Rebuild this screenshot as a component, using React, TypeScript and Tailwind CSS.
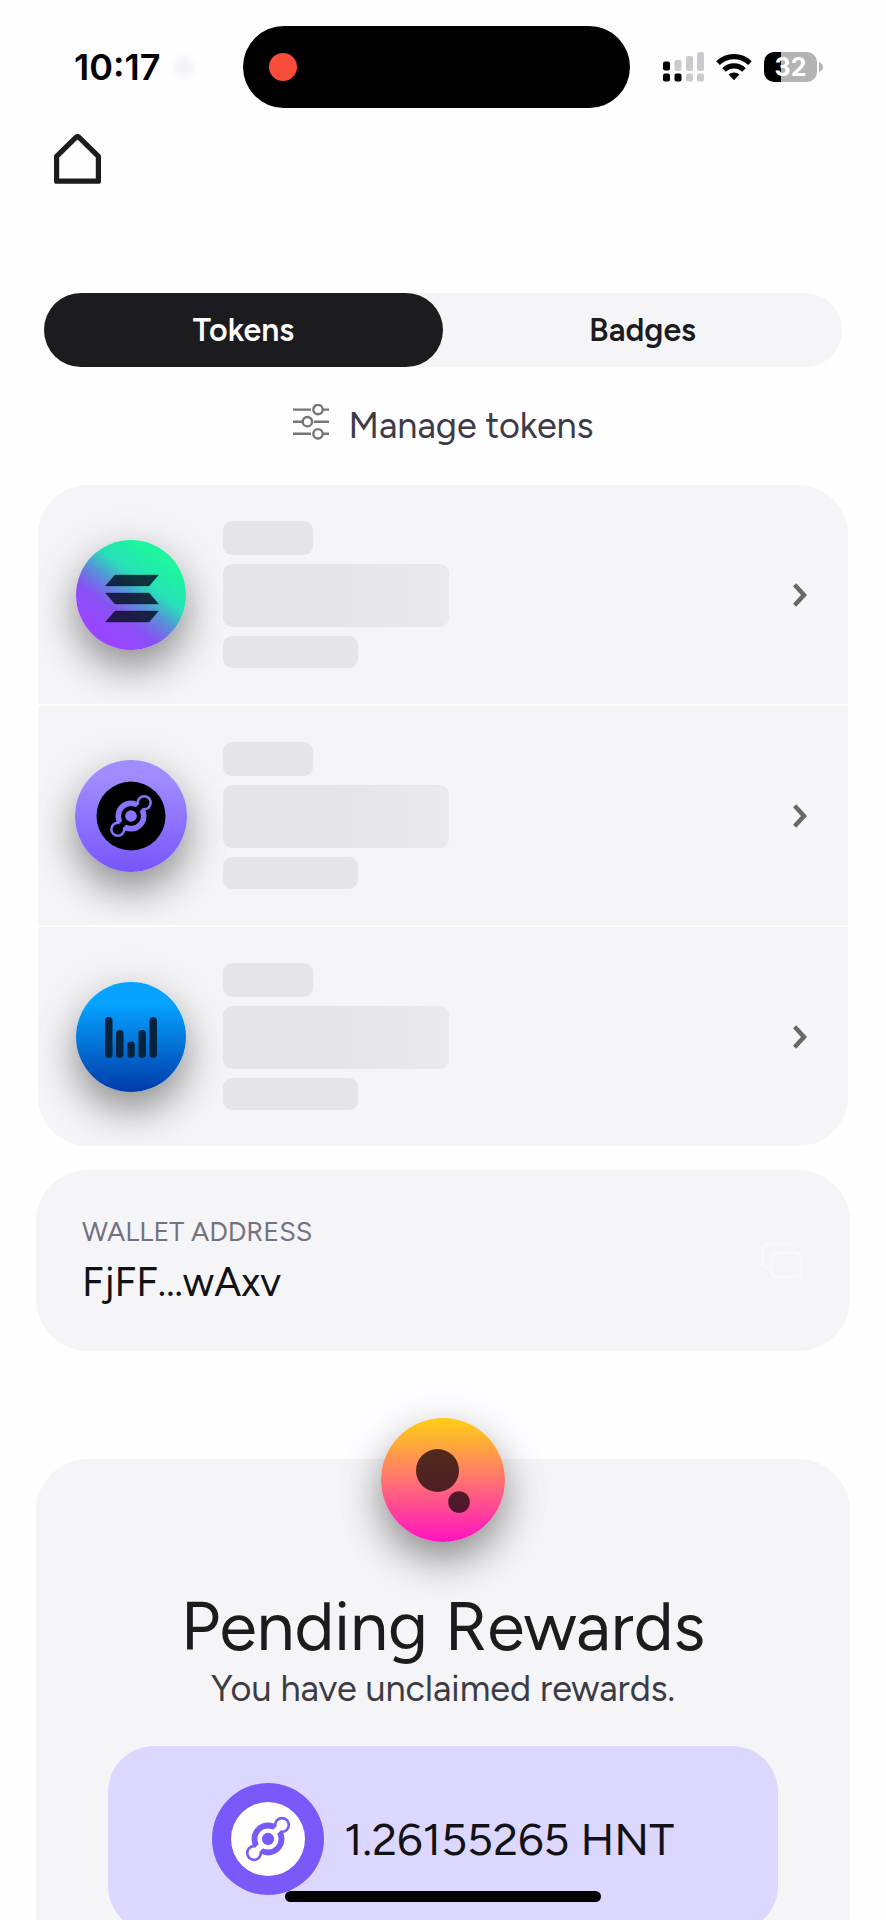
import type { ReactNode } from "react";

function SignalIcon() {
  return (
    <svg viewBox="0 0 41 30" className="h-[30px] w-[41px]" aria-hidden="true">
      <g fill="#cbcacd">
        <rect x="11.5" y="8" width="7" height="11" rx="2" />
        <rect x="23" y="4" width="7" height="15" rx="2" />
        <rect x="34" y="0" width="7" height="19" rx="2" />
        <rect x="23" y="21.5" width="7" height="8" rx="2" />
        <rect x="34" y="21.5" width="7" height="8" rx="2" />
      </g>
      <rect x="0" y="9.5" width="7" height="9" rx="2" />
      <rect x="0" y="21.5" width="7" height="8" rx="2" />
      <rect x="11.5" y="21.5" width="7" height="8" rx="2" />
    </svg>
  );
}

function WifiIcon() {
  return (
    <svg viewBox="0 0 36 28" className="h-[28px] w-[36px]" aria-hidden="true">
      <g fill="none" stroke="#000" strokeWidth="5.2">
        <path d="M2 10.2a23 23 0 0 1 32 0" />
        <path d="M8 17a14.2 14.2 0 0 1 20 0" />
      </g>
      <path d="M18 27.2l-5.4-5.6a7.8 7.8 0 0 1 10.8 0z" />
    </svg>
  );
}

function Battery() {
  return (
    <div className="flex items-center gap-[2px]">
      <div className="flex h-[30px] w-[53px] items-center justify-center rounded-[10px] bg-linear-to-r from-black from-32% to-[#b3b2b5] to-32% font-[Inter,sans-serif] text-[25px] leading-none font-bold text-white">
        32
      </div>
      <svg viewBox="0 0 4 10" className="h-[10px] w-[4px]" aria-hidden="true">
        <path d="M0 0q4 2 4 5t-4 5z" fill="#b3b2b5" />
      </svg>
    </div>
  );
}

function HomeIcon() {
  return (
    <svg viewBox="0 0 47 50" className="h-[50px] w-[47px]" aria-hidden="true">
      <path
        d="M2.6 22.4L22.2 3.2a1.8 1.8 0 0 1 2.6 0L44.4 22.4V47.2H2.6z"
        fill="none"
        stroke="#1c1b20"
        strokeWidth="5.2"
        strokeLinejoin="round"
      />
    </svg>
  );
}

function SlidersIcon() {
  return (
    <svg viewBox="0 0 36 36" className="h-[36px] w-[36px]" fill="none" stroke="#75747a" strokeWidth="2.4" aria-hidden="true">
      <path d="M0 5.6h18M30 5.6h6M0 17.7h9M21 17.7h15M0 29.8h18M30 29.8h6" />
      <circle cx="25" cy="5.6" r="4.7" />
      <circle cx="14.4" cy="17.7" r="4.7" />
      <circle cx="25" cy="29.8" r="4.7" />
    </svg>
  );
}

function SolanaLogo() {
  return (
    <svg viewBox="0 0 110 110" className="h-[110px] w-[110px]" aria-hidden="true">
      <defs>
        <linearGradient id="solana" x1="0.2" y1="0.9" x2="0.8" y2="0.1">
          <stop offset="0.08" stopColor="#9945ff" />
          <stop offset="0.3" stopColor="#8752f3" />
          <stop offset="0.5" stopColor="#5497d5" />
          <stop offset="0.66" stopColor="#28e0b9" />
          <stop offset="0.92" stopColor="#1df59f" />
        </linearGradient>
      </defs>
      <circle cx="55" cy="55" r="55" fill="url(#solana)" />
      <g fill="#050a1e" fillOpacity="0.8" stroke="#050a1e" strokeOpacity="0.3" strokeWidth="1" strokeLinejoin="round">
        <path d="M39 35h43.5L73 46H29.5z" />
        <path d="M29.5 53H73l9.5 11H39z" />
        <path d="M39 71h43.5L73 82H29.5z" />
      </g>
    </svg>
  );
}

function HeliumMark({ mark, disc, radius }: { mark: string; disc: string; radius: number }) {
  return (
    <g transform="translate(56 56)">
      <circle r={radius} fill={disc} />
      <g transform={radius > 35 ? "scale(1.06)" : undefined}>
        <g fill={mark}>
          <circle r="15.5" />
          <circle cx="13.2" cy="-13.2" r="7.7" />
          <circle cx="-13.2" cy="13.2" r="7.7" />
        </g>
        <path d="M-10 10L-6 6M10 -10L6 -6" stroke={disc} strokeWidth="5.5" />
        <g fill={disc}>
          <circle r="10" />
          <circle cx="13.2" cy="-13.2" r="5.2" />
          <circle cx="-13.2" cy="13.2" r="5.2" />
        </g>
        <circle r="5.8" fill={mark} />
      </g>
    </g>
  );
}

function HeliumLogo() {
  return (
    <svg viewBox="0 0 112 112" className="h-[112px] w-[112px]" aria-hidden="true">
      <defs>
        <linearGradient id="helium" x1="0" y1="0" x2="0" y2="1">
          <stop offset="0.15" stopColor="#a18cff" />
          <stop offset="1" stopColor="#7755fb" />
        </linearGradient>
      </defs>
      <circle cx="56" cy="56" r="56" fill="url(#helium)" />
      <HeliumMark mark="#8b72fd" disc="#000" radius={34.5} />
    </svg>
  );
}

function RewardLogo() {
  return (
    <svg viewBox="0 0 112 112" className="h-[112px] w-[112px] shrink-0" aria-hidden="true">
      <circle cx="56" cy="56" r="56" fill="#7a59fb" />
      <HeliumMark mark="#7a59fb" disc="#fff" radius={37} />
    </svg>
  );
}

function MobileLogo() {
  return (
    <svg viewBox="0 0 110 110" className="h-[110px] w-[110px]" aria-hidden="true">
      <defs>
        <linearGradient id="mobile" x1="0" y1="0" x2="0" y2="1">
          <stop offset="0.2" stopColor="#05a2ff" />
          <stop offset="1" stopColor="#003ba8" />
        </linearGradient>
      </defs>
      <circle cx="55" cy="55" r="55" fill="url(#mobile)" />
      <g fill="#03233f">
        <rect x="29" y="35" width="7.5" height="41" rx="3.75" />
        <rect x="40" y="48" width="7.5" height="28" rx="3.75" />
        <rect x="51.3" y="59.5" width="7.5" height="16.5" rx="3.75" />
        <rect x="62.5" y="48" width="7.5" height="28" rx="3.75" />
        <rect x="73.5" y="35" width="7.5" height="41" rx="3.75" />
      </g>
    </svg>
  );
}

function RewardsCoin() {
  return (
    <svg viewBox="0 0 124 124" className="h-[124px] w-[124px]" aria-hidden="true">
      <defs>
        <linearGradient id="coin" x1="0" y1="0" x2="0" y2="1">
          <stop offset="0.03" stopColor="#ffca18" />
          <stop offset="0.5" stopColor="#ff7370" />
          <stop offset="0.97" stopColor="#ff18bd" />
        </linearGradient>
        <linearGradient id="spots" gradientUnits="userSpaceOnUse" x1="0" y1="30" x2="0" y2="95">
          <stop offset="0" stopColor="#4f2d18" />
          <stop offset="1" stopColor="#501430" />
        </linearGradient>
      </defs>
      <circle cx="62" cy="62" r="62" fill="url(#coin)" />
      <circle cx="56.5" cy="52.5" r="21.5" fill="url(#spots)" />
      <circle cx="78" cy="84" r="10.8" fill="url(#spots)" />
    </svg>
  );
}

function CopyIcon() {
  return (
    <svg viewBox="0 0 44 38" className="h-[38px] w-[44px]" fill="none" stroke="#f8f7fa" strokeWidth="3.5" aria-hidden="true">
      <path d="M12 26H8a5 5 0 0 1-5-5V7a5 5 0 0 1 5-5h19a5 5 0 0 1 5 5v4" />
      <rect x="12" y="11" width="29" height="24" rx="5" />
    </svg>
  );
}

function CoinShadow({ children }: { children: ReactNode }) {
  return (
    <span className="flex rounded-full shadow-[0_18px_38px_rgba(0,0,0,0.38),0_10px_60px_rgba(0,0,0,0.08)]">
      {children}
    </span>
  );
}

function TokenRow({ name, logo }: { name: string; logo: ReactNode }) {
  return (
    <li>
      <button
        type="button"
        aria-label={name}
        className="flex h-[219px] w-full items-center overflow-hidden bg-[#f5f4f7] pr-[41px] pl-[37px]"
      >
        <span className="flex w-[112px] justify-center">
          <CoinShadow>{logo}</CoinShadow>
        </span>
        <span className="ml-9 flex flex-1 flex-col gap-[9px]">
          <span className="h-[34px] w-[90px] rounded-[9px] bg-[#e5e5e9]" />
          <span className="h-[63px] w-[226px] rounded-[9px] bg-linear-to-r from-[#e5e5e9] from-50% to-[#eae9ed]" />
          <span className="h-[32px] w-[135px] rounded-[9px] bg-[#e5e5e9]" />
        </span>
        <svg viewBox="0 0 14 24" className="h-[24px] w-[14px]" fill="none" stroke="#68676b" strokeWidth="4.5" aria-hidden="true">
          <path d="M1.6 1.7L11 12L1.600 22.3" />
        </svg>
      </button>
    </li>
  );
}

export default function App() {
  return (
    <div className="flex h-screen flex-col overflow-hidden bg-[#fefdff] font-[Figtree,Lato,sans-serif] text-[#1c1b20]">
      <header className="grid shrink-0 grid-cols-[1fr_auto_1fr] items-center pt-[26px] pr-[13px]">
        <div className="flex items-center gap-[16px] pl-[74px]">
          <time className="font-[Inter,sans-serif] text-[36px] leading-none font-semibold text-black">10:17</time>
          <span className="h-[16px] w-[16px] rounded-full bg-[#ededef] blur-[5px]" />
        </div>
        <div className="flex h-[82px] w-[387px] items-center rounded-full bg-black pl-[26px]">
          <span className="h-[28px] w-[28px] rounded-full bg-[#f94c3b]" />
        </div>
        <div className="flex items-center justify-end gap-3 pr-[50px]">
          <SignalIcon />
          <WifiIcon />
          <Battery />
        </div>
      </header>

      <nav className="flex shrink-0 px-[54px] pt-[26px]">
        <a href="#home" aria-label="Home">
          <HomeIcon />
        </a>
      </nav>

      <main className="shrink-0 px-9 pt-[109px]">
        <div role="tablist" className="mx-2 flex rounded-full bg-[#f5f4f7] text-[32px] leading-none font-semibold">
          <button type="button" role="tab" aria-selected="true" className="h-[74px] flex-1 rounded-full bg-[#1c1b20] text-white">
            Tokens
          </button>
          <button type="button" role="tab" aria-selected="false" className="h-[74px] flex-1 rounded-full">
            Badges
          </button>
        </div>

        <button type="button" className="mx-auto flex h-[118px] items-center gap-5 text-[36px] leading-none text-[#3d3c46]">
          <span className="pb-2">
            <SlidersIcon />
          </span>
          Manage tokens
        </button>

        <ul className="mx-[2px] flex flex-col gap-[2px] overflow-hidden rounded-[50px]">
          <TokenRow name="Solana" logo={<SolanaLogo />} />
          <TokenRow name="Helium" logo={<HeliumLogo />} />
          <TokenRow name="Mobile" logo={<MobileLogo />} />
        </ul>

        <section className="mt-6 flex h-[181px] items-center justify-between rounded-[52px] bg-[#f5f4f7] px-[46px]">
          <div className="pt-[3px]">
            <p className="text-[27px] leading-[40px] text-[#73727f]">WALLET ADDRESS</p>
            <p className="text-[40px] leading-[60px] text-[#121216]">FjFF...wAxv</p>
          </div>
          <button type="button" aria-label="Copy wallet address">
            <CopyIcon />
          </button>
        </section>

        <section className="mt-[108px] flex flex-col items-center rounded-[52px] bg-[#f5f4f7] px-[72px] pb-[72px]">
          <div className="-mt-[41px]">
            <CoinShadow>
              <RewardsCoin />
            </CoinShadow>
          </div>
          <h1 className="mt-[44px] text-[68px] leading-[80px]">Pending Rewards</h1>
          <p className="text-[36px] leading-[46px] text-[#3d3c46]">You have unclaimed rewards.</p>
          <div className="mt-[34px] flex h-[186px] w-full items-center justify-center gap-5 rounded-[46px] bg-[#dbd7ff]">
            <RewardLogo />
            <span className="text-[45px] leading-none text-[#121216]">1.26155265 HNT</span>
          </div>
        </section>
      </main>

      <div className="fixed bottom-[18px] left-1/2 h-[11px] w-[316px] -translate-x-1/2 rounded-full bg-black" />
    </div>
  );
}
